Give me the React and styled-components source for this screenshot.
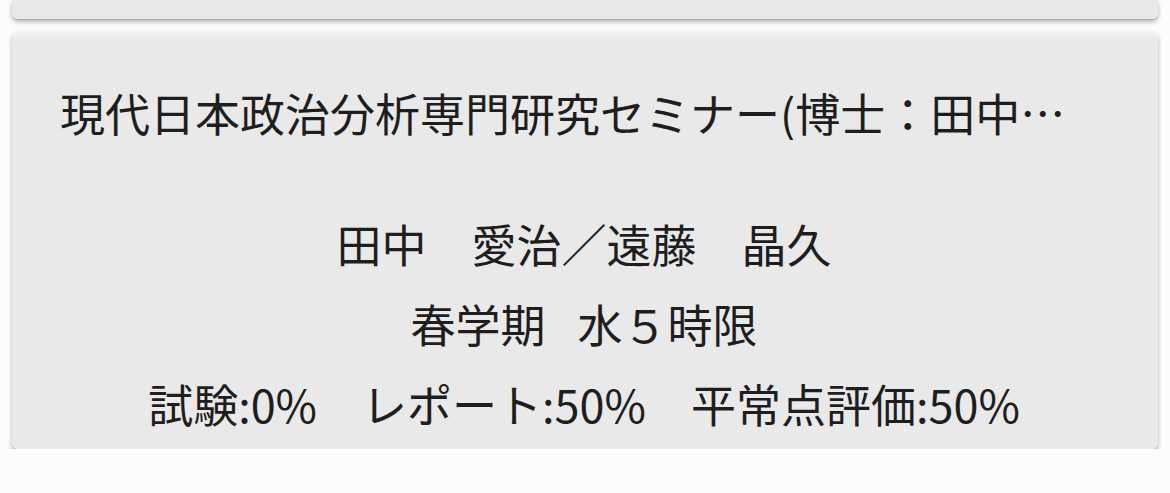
import React from 'react';
import styled, {createGlobalStyle} from 'styled-components';

const GlobalStyle = createGlobalStyle`
    html, body {
        margin: 0;
        padding: 0;
        background-color: #fcfcfc;
        font-family: "Noto Sans CJK JP", "Noto Sans", sans-serif;
        color: #1e1e1e;
    }
`;

const List = styled.div`
    display: flex;
    flex-direction: column;
    gap: 12px;
    padding: 0 12px;
`;

const Card = styled.div`
    background: linear-gradient(to bottom, ${p => p.$clipped ? '#e9e9e9' : '#f5f5f5'} 0px, #e9e9e9 9px);
    border-radius: ${p => p.$clipped ? '0 0 6px 6px' : '6px'};
    box-shadow: 0 3px 5px rgba(0, 0, 0, 0.28), 0 1px 1px rgba(0, 0, 0, 0.14);
    height: ${p => p.$clipped ? '19px' : 'auto'};
    padding: ${p => p.$clipped ? '0' : '55px 50px 18px 48px'};
    box-sizing: border-box;
`;

const Title = styled.div`
    font-size: 45px;
    line-height: 54px;
    white-space: nowrap;
    overflow: hidden;
    text-overflow: ellipsis;
`;

const Info = styled.div`
    margin-top: 77px;
    display: flex;
    flex-direction: column;
    align-items: center;
    gap: 26px;
`;

const InfoLine = styled.div`
    font-size: 45px;
    line-height: 54px;
    white-space: nowrap;
`;

const Spacer = styled.span`
    display: inline-block;
    width: ${p => p.$w}px;
`;

const course = {
    title: '現代日本政治分析専門研究セミナー(博士：田中　愛治)',
    teachers: '田中　愛治／遠藤　晶久',
    term: '春学期',
    slot: '水５時限',
    grading: '試験:0%　レポート:50%　平常点評価:50%',
};

export default function App() {
    return (
        <>
            <GlobalStyle/>
            <List>
                <Card $clipped/>
                <Card>
                    <Title>{course.title}</Title>
                    <Info>
                        <InfoLine>{course.teachers}</InfoLine>
                        <InfoLine>{course.term}<Spacer $w={32}/>{course.slot}</InfoLine>
                        <InfoLine>{course.grading}</InfoLine>
                    </Info>
                </Card>
            </List>
        </>
    );
}
